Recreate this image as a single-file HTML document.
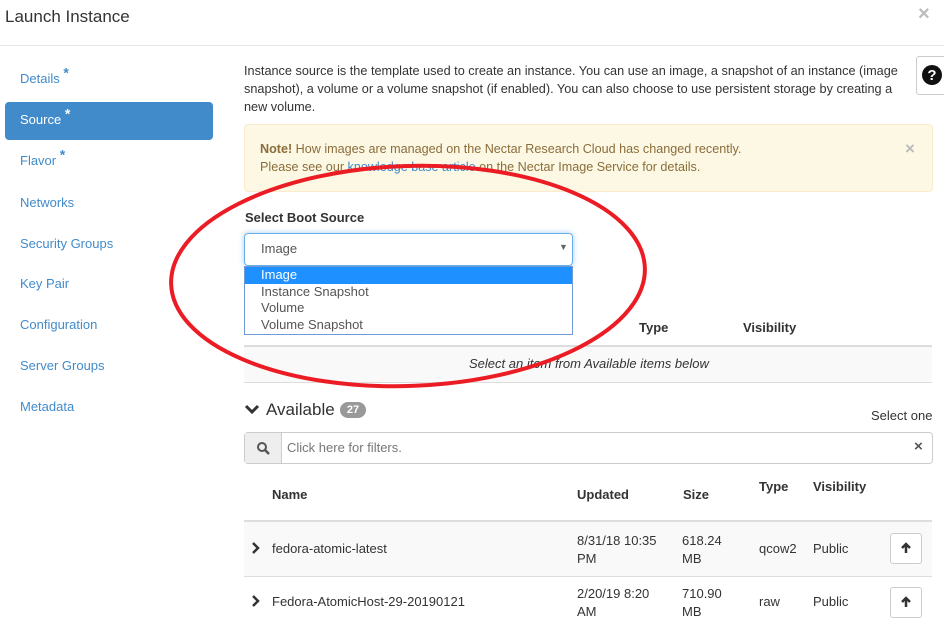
<!DOCTYPE html>
<html><head><style>
body{margin:0;width:944px;height:625px;overflow:hidden;background:#fff;font-family:"Liberation Sans",Arial,sans-serif;font-size:13px;color:#333;position:relative}
.a{position:absolute;white-space:nowrap}
.nav{position:absolute;left:20px;color:#428bca;font-size:13px}
.nav sup{font-size:14px;font-weight:bold;line-height:0}
.th{font-weight:bold}
.btn{position:absolute;left:890px;width:30px;height:29px;border:1px solid #ccc;border-radius:3px;background:#fff}
</style></head><body>
<div class="a" style="left:5px;top:7px;font-size:17px;color:#333">Launch Instance</div>
<div class="a" style="left:918px;top:3px;font-size:20px;color:#bbb;font-weight:bold">×</div>
<div class="a" style="left:0;top:45px;width:944px;height:1px;background:#e5e5e5"></div>

<div class="a" style="left:5px;top:102px;width:208px;height:38px;background:#428bca;border-radius:4px"></div>
<div class="nav" style="top:71px">Details <sup>*</sup></div>
<div class="nav" style="top:112px;color:#fff">Source <sup>*</sup></div>
<div class="nav" style="top:153px">Flavor <sup>*</sup></div>
<div class="nav" style="top:195px">Networks</div>
<div class="nav" style="top:236px">Security Groups</div>
<div class="nav" style="top:276px">Key Pair</div>
<div class="nav" style="top:317px">Configuration</div>
<div class="nav" style="top:358px">Server Groups</div>
<div class="nav" style="top:399px">Metadata</div>

<div class="a" style="left:244px;top:62px;line-height:18px;width:668px;white-space:normal;font-size:12.7px">Instance source is the template used to create an instance. You can use an image, a snapshot of an instance (image snapshot), a volume or a volume snapshot (if enabled). You can also choose to use persistent storage by creating a new volume.</div>
<div class="a" style="left:916px;top:56px;width:30px;height:37px;border:1px solid #ccc;border-radius:3px;background:#fff"></div>
<svg class="a" style="left:921px;top:64px" width="22" height="22"><circle cx="11" cy="11" r="10" fill="#111"/><text x="11" y="16" text-anchor="middle" fill="#fff" font-weight="bold" font-size="15" font-family="Liberation Sans">?</text></svg>

<div class="a" style="left:244px;top:124px;width:687px;height:66px;background:#fcf8e3;border:1px solid #faebcc;border-radius:4px"></div>
<div class="a" style="left:260px;top:140px;line-height:18px;color:#8a6d3b;font-size:12.6px"><b>Note!</b> How images are managed on the Nectar Research Cloud has changed recently.<br>Please see our <span style="color:#428bca">knowledge base article</span> on the Nectar Image Service for details.</div>
<div class="a" style="left:905px;top:139px;color:#bbb;font-size:17px;font-weight:bold">×</div>

<div class="a th" style="left:245px;top:210px">Select Boot Source</div>
<div class="a" style="left:244px;top:233px;width:327px;height:31px;border:1px solid #66afe9;border-radius:4px;box-shadow:0 0 6px rgba(102,175,233,.6)"></div>
<div class="a" style="left:261px;top:241px;color:#555">Image</div>
<div class="a" style="left:559px;top:242px;color:#666;font-size:9px">▼</div>
<div class="a" style="left:244px;top:266px;width:327px;height:67px;border:1px solid #6f9bd5;background:#fff"></div>
<div class="a" style="left:245px;top:267px;width:327px;height:17px;background:#1e90ff"></div>
<div class="a" style="left:261px;top:267px;line-height:16.5px;color:#555"><span style="color:#fff">Image</span><br>Instance Snapshot<br>Volume<br>Volume Snapshot</div>

<div class="a th" style="left:639px;top:320px">Type</div>
<div class="a th" style="left:743px;top:320px">Visibility</div>
<div class="a" style="left:244px;top:345px;width:688px;height:35px;background:#f9f9f9;border-top:2px solid #ddd;border-bottom:1px solid #ddd"></div>
<div class="a" style="left:469px;top:356px;font-style:italic;color:#333">Select an item from Available items below</div>

<svg class="a" style="left:244px;top:403px" width="16" height="14"><path d="M2 3l6 6 6-6" stroke="#333" stroke-width="3" fill="none"/></svg>
<div class="a" style="left:266px;top:400px;font-size:17px">Available</div>
<div class="a" style="left:340px;top:402px;width:26px;height:16px;background:#999;border-radius:8px;color:#fff;font-size:11px;font-weight:bold;text-align:center;line-height:16px">27</div>
<div class="a" style="left:871px;top:408px">Select one</div>

<div class="a" style="left:244px;top:432px;width:687px;height:30px;border:1px solid #ccc;border-radius:4px"></div>
<div class="a" style="left:245px;top:433px;width:36px;height:30px;background:#eee;border-right:1px solid #ccc"></div>
<svg class="a" style="left:256px;top:441px" width="14" height="14"><circle cx="6" cy="6" r="4" stroke="#555" stroke-width="2" fill="none"/><path d="M9 9l4 4" stroke="#555" stroke-width="2.5"/></svg>
<div class="a" style="left:287px;top:440px;color:#777">Click here for filters.</div>
<div class="a" style="left:914px;top:438px;color:#555;font-weight:bold;font-size:15px">×</div>

<div class="a th" style="left:272px;top:487px">Name</div>
<div class="a th" style="left:577px;top:487px">Updated</div>
<div class="a th" style="left:683px;top:487px">Size</div>
<div class="a th" style="left:759px;top:479px">Type</div>
<div class="a th" style="left:813px;top:479px">Visibility</div>
<div class="a" style="left:244px;top:520px;width:688px;height:54px;background:#f9f9f9;border-top:2px solid #ddd;border-bottom:1px solid #ddd"></div>

<svg class="a" style="left:251px;top:542px" width="10" height="12"><path d="M2 1l5 5-5 5" stroke="#333" stroke-width="2.5" fill="none"/></svg>
<div class="a" style="left:272px;top:541px">fedora-atomic-latest</div>
<div class="a" style="left:577px;top:532px;line-height:18px">8/31/18 10:35<br>PM</div>
<div class="a" style="left:682px;top:532px;line-height:18px">618.24<br>MB</div>
<div class="a" style="left:759px;top:541px">qcow2</div>
<div class="a" style="left:813px;top:541px">Public</div>
<div class="btn" style="top:533px"></div>
<svg class="a" style="left:900px;top:542px" width="12" height="12"><path d="M6 11V2M2 6l4-4 4 4" stroke="#333" stroke-width="2.5" fill="none"/></svg>

<svg class="a" style="left:251px;top:595px" width="10" height="12"><path d="M2 1l5 5-5 5" stroke="#333" stroke-width="2.5" fill="none"/></svg>
<div class="a" style="left:272px;top:594px">Fedora-AtomicHost-29-20190121</div>
<div class="a" style="left:577px;top:585px;line-height:18px">2/20/19 8:20<br>AM</div>
<div class="a" style="left:682px;top:585px;line-height:18px">710.90<br>MB</div>
<div class="a" style="left:759px;top:594px">raw</div>
<div class="a" style="left:813px;top:594px">Public</div>
<div class="btn" style="top:587px"></div>
<svg class="a" style="left:900px;top:596px" width="12" height="12"><path d="M6 11V2M2 6l4-4 4 4" stroke="#333" stroke-width="2.5" fill="none"/></svg>

<svg class="a" style="left:0;top:0" width="944" height="625"><ellipse cx="408" cy="276" rx="237" ry="110" transform="rotate(-2 408 276)" fill="none" stroke="#ec1c24" stroke-width="4"/></svg>
</body></html>
